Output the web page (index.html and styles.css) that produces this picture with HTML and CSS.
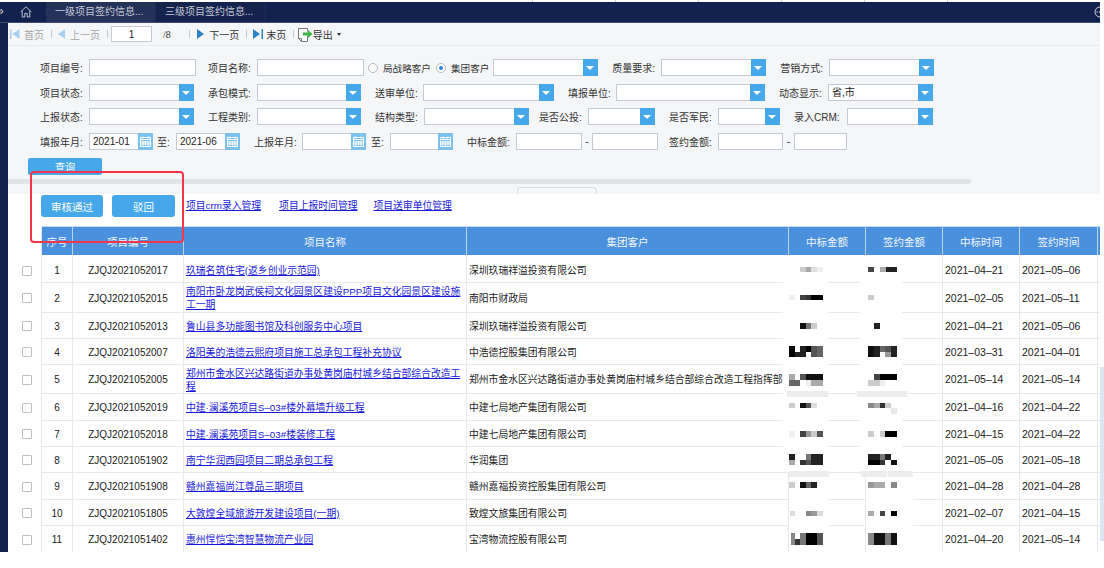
FILE: index.html
```html
<!DOCTYPE html>
<html lang="en">
<head>
    <meta name="viewport" content="width=device-width, initial-scale=1.0">
    <title>项目签约信息</title>
    <link rel="stylesheet" href="styles.css">
</head>
<body>
<div class="page">
    <div class="strip">
        <span class="strip-text">项目签约信息管理查询统计项目签约信息管理</span>
        <span class="strip-ticks"></span>
    </div>

    <div class="tabs">
        <span class="tab-more">»</span>
        <svg class="home" width="12" height="12" viewBox="0 0 12 12"><path d="M.7 5.8 6 .8l5.300 5M2.200 4.800V11h2.600V7.400h2.400V11h2.600V4.800" fill="none" stroke="#ccd2dd" stroke-width=".9"/></svg>
        <div class="tab tab-active">一级项目签约信息...</div>
        <div class="tab">三级项目签约信息...</div>
        <svg class="tab-menu" width="6" height="12" viewBox="0 0 6 12"><circle cx="6" cy="6" r="5" fill="none" stroke="#ccd2dd"/><circle cx="3" cy="6" r=".7" fill="#ccd2dd"/><circle cx="5.500" cy="6" r=".7" fill="#ccd2dd"/></svg>
    </div>

    <div class="shell">
        <div class="side"></div>
        <div class="main">
            <div class="toolbar">
                <svg class="tool-first" width="10" height="10" viewBox="0 0 10 10"><rect width="1.500" height="10" fill="#a9d0ee"/><path d="M9.500 0v10L2.500 5z" fill="#a9d0ee"/></svg>
                <span class="tool-off">首页</span>
                <i class="tool-sep"></i>
                <svg class="tool-icon" width="7" height="10" viewBox="0 0 7 10"><path d="M7 0v10L0 5z" fill="#a9d0ee"/></svg>
                <span class="tool-off">上一页</span>
                <i class="tool-sep sep-tight"></i>
                <input class="page-input" value="1">
                <span class="page-total">/8</span>
                <i class="tool-sep sep-wide"></i>
                <svg class="tool-icon" width="7" height="10" viewBox="0 0 7 10"><path d="M0 0v10l7-5z" fill="#2d82c8"/></svg>
                <span class="tool-on">下一页</span>
                <i class="tool-sep"></i>
                <svg class="tool-icon icon-last" width="10" height="10" viewBox="0 0 10 10"><path d="M0 0v10l7-5z" fill="#2d82c8"/><rect x="8.500" width="1.500" height="10" fill="#2d82c8"/></svg>
                <span class="tool-on">末页</span>
                <i class="tool-sep sep-export"></i>
                <svg class="tool-export" width="15" height="15" viewBox="0 0 15 15"><path d="M.5 1.500h9v3M9.500 9v5.500h-6l-3-3v-10M.5 11.500h3v3" fill="#fff" stroke="#777"/><path d="M5 5.500h5V3l4.500 4-4.500 4V8.500H5z" fill="#3db54a"/></svg>
                <span class="tool-on">导出</span>
                <i class="tool-caret"></i>
            </div>

            <div class="filters">
                <div class="filter-row">
                    <label class="lbl">项目编号:</label>
                    <div class="box w107"></div>
                    <label class="lbl ml12">项目名称:</label>
                    <div class="box w107"></div>
                    <i class="radio ml4"></i><span class="radio-text">局战略客户</span>
                    <i class="radio radio-on ml5"></i><span class="radio-text">集团客户</span>
                    <div class="box combo w105 ml4"><i class="arrow"></i></div>
                    <label class="lbl">质量要求:</label>
                    <div class="box combo w105"><i class="arrow"></i></div>
                    <label class="lbl">营销方式:</label>
                    <div class="box combo w105"><i class="arrow"></i></div>
                </div>
                <div class="filter-row">
                    <label class="lbl">项目状态:</label>
                    <div class="box combo w105"><i class="arrow"></i></div>
                    <label class="lbl">承包模式:</label>
                    <div class="box combo w104"><i class="arrow"></i></div>
                    <label class="lbl lbl48">送审单位:</label>
                    <div class="box combo w131"><i class="arrow"></i></div>
                    <label class="lbl lbl48">填报单位:</label>
                    <div class="box combo w149"><i class="arrow"></i></div>
                    <label class="lbl">动态显示:</label>
                    <div class="box combo w105">省,市<i class="arrow"></i></div>
                </div>
                <div class="filter-row">
                    <label class="lbl">上报状态:</label>
                    <div class="box combo w105"><i class="arrow"></i></div>
                    <label class="lbl">工程类别:</label>
                    <div class="box combo w104"><i class="arrow"></i></div>
                    <label class="lbl">结构类型:</label>
                    <div class="box combo w105"><i class="arrow"></i></div>
                    <label class="lbl ml10">是否公投:</label>
                    <div class="box combo w67"><i class="arrow"></i></div>
                    <label class="lbl">是否军民:</label>
                    <div class="box combo w62"><i class="arrow"></i></div>
                    <label class="lbl lbl-crm">录入CRM:</label>
                    <div class="box combo w86"><i class="arrow"></i></div>
                </div>
                <div class="filter-row">
                    <label class="lbl">填报年月:</label>
                    <div class="box combo w64">2021-01<i class="cal"><svg width="11" height="11" viewBox="0 0 11 11"><path d="M.5 1.500h10v9H.5zM.5 3.500h10M3 .5v2M8 .5v2M3 5v4.500M5.500 5v4.500M8 5v4.500M1 6h9M1 8h9" fill="none" stroke="#fff"/></svg></i></div>
                    <span class="to">至:</span>
                    <div class="box combo w64">2021-06<i class="cal"><svg width="11" height="11" viewBox="0 0 11 11"><path d="M.5 1.500h10v9H.5zM.5 3.500h10M3 .5v2M8 .5v2M3 5v4.500M5.500 5v4.500M8 5v4.500M1 6h9M1 8h9" fill="none" stroke="#fff"/></svg></i></div>
                    <label class="lbl lbl48">上报年月:</label>
                    <div class="box combo w64"><i class="cal"><svg width="11" height="11" viewBox="0 0 11 11"><path d="M.5 1.500h10v9H.5zM.5 3.500h10M3 .5v2M8 .5v2M3 5v4.500M5.500 5v4.500M8 5v4.500M1 6h9M1 8h9" fill="none" stroke="#fff"/></svg></i></div>
                    <span class="to to-b">至:</span>
                    <div class="box combo w63"><i class="cal"><svg width="11" height="11" viewBox="0 0 11 11"><path d="M.5 1.500h10v9H.5zM.5 3.500h10M3 .5v2M8 .5v2M3 5v4.500M5.500 5v4.500M8 5v4.500M1 6h9M1 8h9" fill="none" stroke="#fff"/></svg></i></div>
                    <label class="lbl">中标金额:</label>
                    <div class="box w66"></div>
                    <span class="dash">-</span>
                    <div class="box w66"></div>
                    <label class="lbl ml11">签约金额:</label>
                    <div class="box w65"></div>
                    <span class="dash dash-b">-</span>
                    <div class="box w53"></div>
                </div>
                <button class="query-btn">查询</button>
                <div class="splitter"></div>
                <div class="handle-zone"><span class="handle"></span></div>
            </div>

            <div class="actions">
                <button class="act-btn">审核通过</button>
                <button class="act-btn act-second">驳回</button>
                <a class="act-link link-a" href="#">项目crm录入管理</a>
                <a class="act-link link-b" href="#">项目上报时间管理</a>
                <a class="act-link link-c" href="#">项目送审单位管理</a>
            </div>

            <div class="table-wrap">
                <table class="sign-table">
                    <colgroup>
                        <col class="c-check"><col class="c-no"><col class="c-code"><col class="c-name"><col class="c-client">
                        <col class="c-money"><col class="c-money"><col class="c-money"><col class="c-date2"><col class="c-rest">
                    </colgroup>
                    <thead>
                        <tr>
                            <th class="th-blank"></th>
                            <th>序号</th>
                            <th>项目编号</th>
                            <th>项目名称</th>
                            <th>集团客户</th>
                            <th>中标金额</th>
                            <th>签约金额</th>
                            <th>中标时间</th>
                            <th>签约时间</th>
                            <th></th>
                        </tr>
                    </thead>
                    <tbody>
                        <tr class="r28">
                            <td class="td-check"><i class="check"></i></td><td class="mid">1</td><td class="mid">ZJQJ2021052017</td>
                            <td><a href="#">玖瑞名筑住宅(返乡创业示范园)</a></td><td>深圳玖瑞祥溢投资有限公司</td>
                            <td></td><td></td><td class="date">2021–04–21</td><td class="date">2021–05–06</td><td class="td-rest"></td>
                        </tr>
                        <tr class="r30">
                            <td class="td-check"><i class="check"></i></td><td class="mid">2</td><td class="mid">ZJQJ2021052015</td>
                            <td><a href="#">南阳市卧龙岗武侯祠文化园景区建设PPP项目文化园景区建设施<br>工一期</a></td><td>南阳市财政局</td>
                            <td></td><td></td><td class="date">2021–02–05</td><td class="date">2021–05–11</td><td class="td-rest"></td>
                        </tr>
                        <tr class="r26">
                            <td class="td-check"><i class="check"></i></td><td class="mid">3</td><td class="mid">ZJQJ2021052013</td>
                            <td><a href="#">鲁山县多功能图书馆及科创服务中心项目</a></td><td>深圳玖瑞祥溢投资有限公司</td>
                            <td></td><td></td><td class="date">2021–04–21</td><td class="date">2021–05–06</td><td class="td-rest"></td>
                        </tr>
                        <tr class="r26">
                            <td class="td-check"><i class="check"></i></td><td class="mid">4</td><td class="mid">ZJQJ2021052007</td>
                            <td><a href="#">洛阳美的浩德云熙府项目施工总承包工程补充协议</a></td><td>中浩德控股集团有限公司</td>
                            <td></td><td></td><td class="date">2021–03–31</td><td class="date">2021–04–01</td><td class="td-rest"></td>
                        </tr>
                        <tr class="r29">
                            <td class="td-check"><i class="check"></i></td><td class="mid">5</td><td class="mid">ZJQJ2021052005</td>
                            <td><a href="#">郑州市金水区兴达路街道办事处黄岗庙村城乡结合部综合改造工<br>程</a></td><td>郑州市金水区兴达路街道办事处黄岗庙村城乡结合部综合改造工程指挥部</td>
                            <td></td><td></td><td class="date">2021–05–14</td><td class="date">2021–05–14</td><td class="td-rest"></td>
                        </tr>
                        <tr class="r27">
                            <td class="td-check"><i class="check"></i></td><td class="mid">6</td><td class="mid">ZJQJ2021052019</td>
                            <td><a href="#">中建·澜溪苑项目S–03#楼外幕墙升级工程</a></td><td>中建七局地产集团有限公司</td>
                            <td></td><td></td><td class="date">2021–04–16</td><td class="date">2021–04–22</td><td class="td-rest"></td>
                        </tr>
                        <tr class="r26">
                            <td class="td-check"><i class="check"></i></td><td class="mid">7</td><td class="mid">ZJQJ2021052018</td>
                            <td><a href="#">中建·澜溪苑项目S–03#楼装修工程</a></td><td>中建七局地产集团有限公司</td>
                            <td></td><td></td><td class="date">2021–04–15</td><td class="date">2021–04–22</td><td class="td-rest"></td>
                        </tr>
                        <tr class="r26">
                            <td class="td-check"><i class="check"></i></td><td class="mid">8</td><td class="mid">ZJQJ2021051902</td>
                            <td><a href="#">南宁华润西园项目二期总承包工程</a></td><td>华润集团</td>
                            <td></td><td></td><td class="date">2021–05–05</td><td class="date">2021–05–18</td><td class="td-rest"></td>
                        </tr>
                        <tr class="r27">
                            <td class="td-check"><i class="check"></i></td><td class="mid">9</td><td class="mid">ZJQJ2021051908</td>
                            <td><a href="#">赣州嘉福尚江尊品三期项目</a></td><td>赣州嘉福投资控股集团有限公司</td>
                            <td></td><td></td><td class="date">2021–04–28</td><td class="date">2021–04–28</td><td class="td-rest"></td>
                        </tr>
                        <tr class="r26">
                            <td class="td-check"><i class="check"></i></td><td class="mid">10</td><td class="mid">ZJQJ2021051805</td>
                            <td><a href="#">大敦煌全域旅游开发建设项目(一期)</a></td><td>致煌文旅集团有限公司</td>
                            <td></td><td></td><td class="date">2021–02–07</td><td class="date">2021–04–15</td><td class="td-rest"></td>
                        </tr>
                        <tr class="r27">
                            <td class="td-check"><i class="check"></i></td><td class="mid">11</td><td class="mid">ZJQJ2021051402</td>
                            <td><a href="#">惠州悍恺宝湾智慧物流产业园</a></td><td>宝湾物流控股有限公司</td>
                            <td></td><td></td><td class="date">2021–04–20</td><td class="date">2021–05–14</td><td class="td-rest"></td>
                        </tr>
                    </tbody>
                </table>

                <!-- amounts are blurred out in the source, drawn as mosaic blocks -->
                <svg class="mosaic" width="133.330" height="297" viewBox="60 105 400 891" shape-rendering="crispEdges">
                    <g fill="#fff">
                        <rect x="70" y="105" width="135" height="650"/><rect x="300" y="105" width="125" height="650"/>
                        <rect x="87" y="760" width="120" height="236"/><rect x="318" y="760" width="140" height="236"/>
                    </g>
                    <g fill="#ececec">
                        <rect x="80" y="513" width="125" height="17"/><rect x="290" y="513" width="150" height="17"/>
                        <rect x="88" y="753" width="119" height="17"/><rect x="302" y="753" width="78" height="17"/><rect x="385" y="753" width="75" height="17"/>
                    </g>
                    <g><rect x="120" y="140" width="17" height="16" fill="#ccc"/><rect x="137" y="140" width="17" height="16" fill="#aaa"/><rect x="154" y="140" width="17" height="16" fill="#e0e0e0"/><rect x="171" y="140" width="17" height="16" fill="#eee"/>
                    <rect x="325" y="140" width="17" height="16" fill="#444"/><rect x="360" y="140" width="17" height="16" fill="#aaa"/><rect x="377" y="140" width="33" height="16" fill="#222"/></g>
                    <g><rect x="88" y="225" width="16" height="16" fill="#eee"/><rect x="120" y="225" width="17" height="16" fill="#444"/><rect x="137" y="225" width="17" height="16" fill="#333"/><rect x="154" y="225" width="34" height="16" fill="#000"/>
                    <rect x="325" y="225" width="17" height="16" fill="#ccc"/></g>
                    <g><rect x="120" y="310" width="17" height="16" fill="#111"/><rect x="137" y="310" width="17" height="16" fill="#777"/><rect x="154" y="310" width="17" height="16" fill="#ccc"/>
                    <rect x="342" y="310" width="17" height="16" fill="#222"/></g>
                    <g><rect x="88" y="378" width="16" height="34" fill="#000"/><rect x="104" y="395" width="16" height="17" fill="#222"/><rect x="120" y="378" width="17" height="34" fill="#222"/><rect x="137" y="378" width="17" height="17" fill="#000"/><rect x="154" y="378" width="17" height="34" fill="#555"/><rect x="171" y="378" width="17" height="34" fill="#666"/>
                    <rect x="325" y="378" width="17" height="34" fill="#111"/><rect x="342" y="378" width="17" height="34" fill="#222"/><rect x="359" y="378" width="17" height="17" fill="#666"/><rect x="376" y="378" width="17" height="17" fill="#555"/><rect x="376" y="395" width="17" height="17" fill="#999"/><rect x="393" y="378" width="17" height="34" fill="#222"/></g>
                    <g><rect x="88" y="463" width="16" height="17" fill="#aaa"/><rect x="88" y="480" width="32" height="17" fill="#666"/><rect x="120" y="463" width="17" height="17" fill="#555"/><rect x="137" y="463" width="51" height="17" fill="#111"/><rect x="137" y="480" width="17" height="17" fill="#eee"/><rect x="154" y="480" width="34" height="17" fill="#aaa"/>
                    <rect x="342" y="463" width="17" height="17" fill="#444"/><rect x="359" y="463" width="51" height="17" fill="#000"/><rect x="325" y="480" width="34" height="17" fill="#ccc"/><rect x="359" y="480" width="17" height="17" fill="#eee"/></g>
                    <g><rect x="88" y="548" width="16" height="17" fill="#ccc"/><rect x="120" y="548" width="17" height="17" fill="#111"/><rect x="137" y="548" width="17" height="17" fill="#555"/><rect x="154" y="548" width="17" height="17" fill="#ddd"/>
                    <rect x="325" y="548" width="17" height="17" fill="#888"/><rect x="342" y="548" width="17" height="17" fill="#aaa"/><rect x="359" y="548" width="17" height="17" fill="#333"/><rect x="376" y="548" width="17" height="17" fill="#ccc"/><rect x="393" y="565" width="17" height="17" fill="#e8e8e8"/></g>
                    <g><rect x="88" y="634" width="16" height="17" fill="#eee"/><rect x="120" y="634" width="17" height="17" fill="#444"/><rect x="137" y="634" width="17" height="17" fill="#999"/><rect x="154" y="634" width="17" height="17" fill="#ccc"/><rect x="171" y="634" width="17" height="17" fill="#555"/>
                    <rect x="325" y="634" width="17" height="17" fill="#ccc"/><rect x="359" y="634" width="17" height="17" fill="#ccc"/><rect x="376" y="634" width="34" height="17" fill="#000"/></g>
                    <g><rect x="88" y="702" width="16" height="17" fill="#222"/><rect x="88" y="719" width="16" height="17" fill="#aaa"/><rect x="120" y="719" width="17" height="17" fill="#333"/><rect x="137" y="702" width="17" height="17" fill="#777"/><rect x="137" y="719" width="17" height="17" fill="#555"/><rect x="154" y="702" width="34" height="34" fill="#222"/>
                    <rect x="325" y="702" width="34" height="17" fill="#222"/><rect x="325" y="719" width="34" height="17" fill="#000"/><rect x="359" y="702" width="17" height="17" fill="#777"/><rect x="359" y="719" width="17" height="17" fill="#333"/><rect x="376" y="702" width="17" height="17" fill="#222"/><rect x="393" y="719" width="17" height="17" fill="#111"/></g>
                    <g><rect x="88" y="787" width="16" height="17" fill="#ccc"/><rect x="120" y="787" width="17" height="17" fill="#111"/><rect x="137" y="787" width="17" height="17" fill="#666"/><rect x="154" y="787" width="17" height="17" fill="#222"/>
                    <rect x="325" y="787" width="17" height="17" fill="#999"/><rect x="342" y="787" width="17" height="17" fill="#aaa"/><rect x="359" y="787" width="17" height="17" fill="#aaa"/><rect x="393" y="787" width="17" height="17" fill="#888"/></g>
                    <g><rect x="90" y="872" width="14" height="17" fill="#ddd"/><rect x="137" y="872" width="17" height="17" fill="#888"/><rect x="154" y="872" width="17" height="17" fill="#999"/><rect x="171" y="872" width="17" height="17" fill="#ddd"/>
                    <rect x="325" y="872" width="17" height="17" fill="#aaa"/><rect x="359" y="872" width="17" height="17" fill="#444"/><rect x="393" y="872" width="17" height="17" fill="#000"/></g>
                    <g><rect x="92" y="940" width="12" height="34" fill="#888"/><rect x="104" y="957" width="16" height="17" fill="#333"/><rect x="120" y="940" width="17" height="34" fill="#777"/><rect x="137" y="940" width="34" height="34" fill="#000"/><rect x="171" y="940" width="17" height="34" fill="#555"/>
                    <rect x="325" y="940" width="17" height="34" fill="#888"/><rect x="342" y="940" width="34" height="34" fill="#111"/><rect x="376" y="940" width="17" height="34" fill="#777"/><rect x="393" y="940" width="17" height="34" fill="#111"/></g>
                </svg>
            </div>
        </div>
    </div>

    <div class="red-mark"></div>
</div>
<div class="scroll-thumb"></div>
</body>
</html>
```

FILE: styles.css
```css
body {
    margin: 0;
    background: #fff;
    color: #222;
    font-family: "Liberation Sans", "Noto Sans CJK SC", sans-serif;
    font-size: 10px;
    overflow: hidden;
}

.page {
    position: relative;
    display: flex;
    flex-direction: column;
    width: 1100px;
    height: 552px;
    overflow: hidden;
}

.strip {
    display: flex;
    align-items: flex-end;
    flex: none;
    height: 2px;
    overflow: hidden;
}

.strip-text {
    flex: none;
    width: 499px;
    padding-left: 33px;
    color: #2a36e0;
    font-size: 13px;
    line-height: 16px;
}

.strip-ticks {
    flex: none;
    width: 417px;
    height: 2px;
    background: repeating-linear-gradient(to right, #ccc 0, #ccc 1px, #fff 1px, #fff 83px);
}

/* tabs */
.tabs {
    display: flex;
    align-items: stretch;
    flex: none;
    height: 21px;
    background: #12224f;
    border-bottom: 1px solid #3e4a6a;
    box-sizing: border-box;
}

.tab-more {
    width: 20px;
    margin-left: -3px;
    padding-left: 0;
    color: #ccd2dd;
    font-size: 12px;
    line-height: 18px;
}

.home {
    margin: 4px 14px 0 3px;
}

.tab {
    width: 110px;
    padding-left: 9px;
    box-sizing: border-box;
    border-right: 1px solid #1d2c58;
    background: #14244f;
    color: #c5cad6;
    font-size: 10px;
    line-height: 19px;
}

.tab-active {
    background: #233258;
}

.tab-menu {
    margin: 4px 0 0 auto;
}

.shell {
    display: flex;
    flex: 1;
    min-height: 0;
}

.side {
    flex: none;
    width: 8px;
    background: #12224f;
}

.main {
    flex: 1;
    min-width: 0;
}

/* toolbar */
.toolbar {
    display: flex;
    align-items: center;
    height: 23px;
    box-sizing: border-box;
    padding-left: 2px;
    background: #f5f6f8;
    border-bottom: 1px solid #e9eaed;
    font-size: 10px;
}

.tool-first {
    margin-right: 4px;
}

.tool-icon {
    margin-right: 5px;
}

.icon-last {
    margin-right: 3px;
}

.tool-off {
    color: #a4a6a9;
}

.tool-on {
    color: #333;
}

.tool-sep {
    width: 1px;
    height: 8px;
    margin: 0 6.5px;
    background: #c4c6ca;
}

.sep-tight {
    margin-right: 3.5px;
}

.sep-wide {
    margin-left: 18px;
    margin-right: 7.500px;
}

.sep-export {
    margin-right: 4px;
}

.page-input {
    width: 41px;
    height: 16px;
    box-sizing: border-box;
    padding: 0;
    border: 1px solid #c7cbd3;
    background: #fff;
    font-family: "Liberation Sans", sans-serif;
    font-size: 10px;
    text-align: center;
    color: #222;
}

.page-total {
    margin-left: 11px;
    color: #333;
    font-family: "Liberation Serif", serif;
}

.tool-caret {
    width: 0;
    height: 0;
    margin-left: 4px;
    border: 2px solid transparent;
    border-top: 3px solid #333;
    border-bottom: 0;
}

/* filter area */
.filters {
    height: 148px;
    box-sizing: border-box;
    padding-top: 13px;
    background: #f5f6f8;
}

.filter-row {
    display: flex;
    align-items: center;
    height: 17px;
    margin-bottom: 7.670px;
    padding-left: 32px;
    font-size: 10px;
    color: #333;
}

.lbl {
    flex: none;
    width: 49px;
    margin-left: 14px;
    white-space: nowrap;
}

.filter-row > .lbl:first-child {
    margin-left: 0;
}

.ml10 { margin-left: 10px; }
.ml11 { margin-left: 11px; }
.ml12 { margin-left: 12px; }
.ml4 { margin-left: 4px; }
.ml5 { margin-left: 5px; }

.lbl48 {
    width: 48px;
}

.lbl-crm {
    width: 53px;
}

.box {
    position: relative;
    flex: none;
    height: 17px;
    box-sizing: border-box;
    padding-left: 3px;
    background: #fff;
    border: 1px solid #c5c9d6;
    font-size: 10px;
    line-height: 15px;
    color: #222;
}

.w53 { width: 53px; }
.w62 { width: 62px; }
.w63 { width: 63px; }
.w64 { width: 64px; }
.w65 { width: 65px; }
.w66 { width: 66px; }
.w67 { width: 67px; }
.w86 { width: 86px; }
.w104 { width: 104px; }
.w105 { width: 105px; }
.w107 { width: 107px; }
.w131 { width: 131px; }
.w149 { width: 149px; }

.arrow {
    position: absolute;
    top: -1px;
    right: -1px;
    width: 15px;
    height: 17px;
    background: #46a7ea;
}

.arrow::after {
    content: "";
    position: absolute;
    top: 7px;
    left: 3px;
    border: 4.500px solid transparent;
    border-top: 4px solid #fff;
    border-bottom: 0;
}

.cal {
    position: absolute;
    top: -1px;
    right: -1px;
    display: flex;
    align-items: center;
    justify-content: center;
    width: 15px;
    height: 17px;
    background: #7cc0ee;
}

.radio {
    flex: none;
    width: 10px;
    height: 10px;
    box-sizing: border-box;
    background: #fff;
    border: 1px solid #b4b7bd;
    border-radius: 50%;
}

.radio-on {
    position: relative;
}

.radio-on::after {
    content: "";
    position: absolute;
    top: 2px;
    left: 2px;
    width: 4px;
    height: 4px;
    border-radius: 50%;
    background: #2c7ee8;
}

.radio-text {
    margin-left: 5px;
    font-size: 9.600px;
    white-space: nowrap;
}

.to {
    flex: none;
    width: 19px;
    margin-left: 4px;
}

.to-b {
    margin-left: 5px;
}

.dash {
    flex: none;
    width: 10px;
    text-align: center;
}

.dash-b {
    width: 11px;
}

.query-btn {
    display: block;
    width: 74px;
    height: 17px;
    margin: 7px 0 0 20px;
    padding: 0;
    border: 0;
    border-radius: 2px;
    background: #46a7ea;
    color: #fff;
    font-family: "Noto Sans CJK SC", sans-serif;
    font-size: 10px;
}

.splitter {
    width: 963px;
    height: 5px;
    margin-top: 4px;
    background: #e2e3e6;
    border-radius: 0 3px 3px 0;
}

.handle-zone {
    height: 10px;
    padding: 3px 0 0 509px;
    box-sizing: border-box;
}

.handle {
    display: block;
    width: 80px;
    height: 7px;
    box-sizing: border-box;
    border: 1px solid #dcdde0;
    border-bottom: 0;
    border-radius: 4px 4px 0 0;
}

/* audit buttons and links */
.actions {
    display: flex;
    align-items: flex-start;
    height: 32px;
    box-sizing: border-box;
    padding: 1px 0 0 33px;
}

.act-btn {
    width: 62px;
    height: 22px;
    padding: 0;
    border: 0;
    border-radius: 3px;
    background: #46a7ea;
    color: #fff;
    font-family: "Noto Sans CJK SC", sans-serif;
    font-size: 10.500px;
}

.act-second {
    width: 63px;
    margin-left: 9px;
}

.act-link {
    margin-top: 4px;
    color: #1a1adb;
    font-size: 9.800px;
    line-height: 13px;
    white-space: nowrap;
}

.link-a { margin-left: 11px; }
.link-b { margin-left: 18px; }
.link-c { margin-left: 16px; }

/* table */
.table-wrap {
    position: relative;
}

.sign-table {
    width: 1092px;
    table-layout: fixed;
    border-collapse: separate;
    border-spacing: 0;
    font-size: 9.800px;
}

.c-check { width: 34px; }
.c-no { width: 31px; }
.c-code { width: 111px; }
.c-name { width: 283px; }
.c-client { width: 322px; }
.c-money { width: 77px; }
.c-date2 { width: 78px; }
.c-rest { width: 2px; }

.sign-table th {
    box-sizing: border-box;
    height: 29px;
    padding: 0;
    background: #4a90dc;
    border-right: 1px solid #b9d4f0;
    border-top: 1px solid #c8dcf2;
    color: #f2f7fd;
    font-size: 10.500px;
    font-weight: normal;
}

.sign-table th:last-child {
    border-right: 0;
}

.sign-table .th-blank {
    background: #fff;
    border-top: 0;
    border-right: 1px solid #e4e6ea;
}

.sign-table td {
    box-sizing: border-box;
    padding: 1px 2px 0;
    border-right: 1px solid #e8e9ec;
    border-bottom: 1px solid #e8e9ec;
    line-height: 13px;
    white-space: nowrap;
    overflow: hidden;
}

.sign-table .r28 td {
    padding-top: 3px;
}

.sign-table tr:last-child td {
    padding-top: 0;
}

.sign-table .td-check {
    padding: 0 0 0 14px;
    border-bottom: 0;
    border-right: 1px solid #e4e6ea;
}

.sign-table .td-rest {
    padding: 0;
    border-right: 0;
}

.check {
    display: block;
    width: 10px;
    height: 10px;
    box-sizing: border-box;
    border: 1px solid #bcbfc4;
    border-radius: 1px;
    background: #fff;
}

.sign-table .mid {
    text-align: center;
    font-size: 10px;
}

.sign-table .date {
    font-size: 10.500px;
}

.sign-table a {
    color: #1a1adb;
}

.r26 td { height: 26px; }
.r27 td { height: 27px; }
.r28 td { height: 28px; }
.r29 td { height: 29px; }
.r30 td { height: 30px; }

.mosaic {
    position: absolute;
    top: 29px;
    left: 772px;
}

/* overlays */
.red-mark {
    position: absolute;
    top: 171px;
    left: 30px;
    width: 154px;
    height: 72px;
    box-sizing: border-box;
    border: 2px solid #f4364c;
    border-radius: 4px;
}

.scroll-thumb {
    position: absolute;
    top: 367px;
    left: 1100px;
    width: 4px;
    height: 174px;
    background: #dde6f2;
}
```
